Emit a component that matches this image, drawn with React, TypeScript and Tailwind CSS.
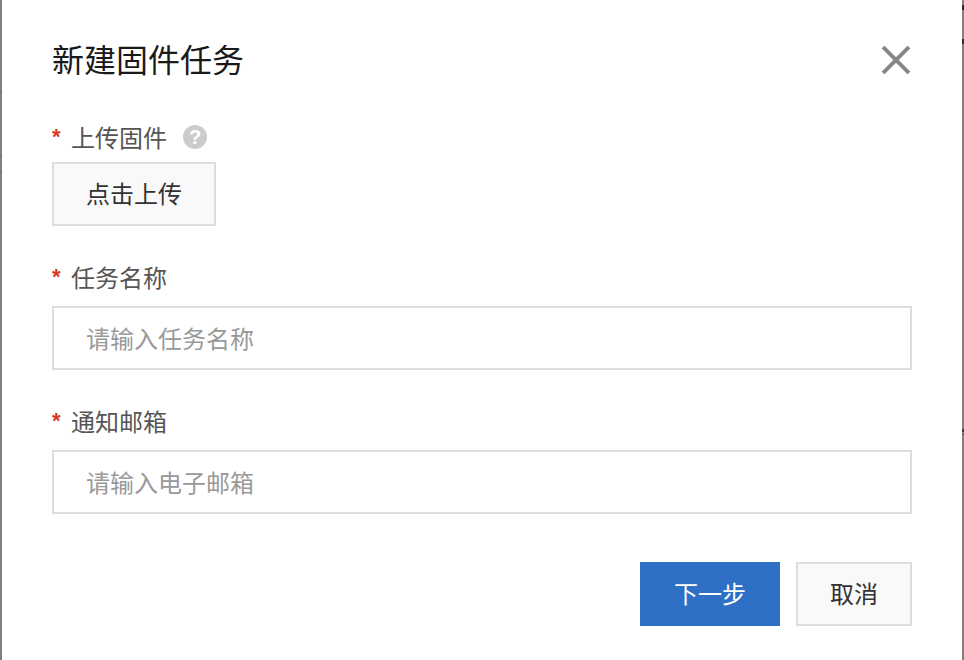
function FieldLabel({ text, children, className }: { text: string; children?: React.ReactNode; className: string }) {
  return (
    <div className={`flex items-center pb-[3px] text-[24px] text-[#555] ${className}`}>
      <span className="w-[19px] font-['Liberation_Sans',sans-serif] text-[22px] font-bold leading-none text-[#d9352b]">*</span>
      <span>{text}</span>
      {children}
    </div>
  );
}

// bits of the page behind the dialog that show through the side borders
const edgeMarks = [
  'right-0 top-[5px] h-[5px] bg-[#2a2a2a]',
  'right-0 top-[39px] h-[5px] bg-[#2a2a2a]',
  'right-0 top-[429px] h-[3px] bg-[#3a3a3a]',
  'right-0 top-[434px] h-[1px] bg-[#555]',
  'left-0 top-[92px] h-[1px] bg-[#666]',
  'left-0 top-[155px] h-[1px] bg-[#666]',
  'left-0 top-[172px] h-[1px] bg-[#666]',
];

export default function App() {
  return (
    <div className="relative h-[660px] w-[964px] overflow-hidden">
      <div className="h-full border-x-2 border-[#808080] bg-white px-[50px] pt-[40px] font-['Noto_Sans_CJK_SC','Noto_Sans',sans-serif]">
        <div className="flex h-[40px] items-center justify-between">
          <h1 className="pb-[4px] text-[32px] font-normal text-[#1a1a1a]">新建固件任务</h1>
          <button className="mr-[2px] text-[#888]">
            <svg width="28" height="28" viewBox="0 0 28 28" fill="none" stroke="currentColor" strokeWidth="4">
              <path d="M1 1L27 27M27 1L1 27" />
            </svg>
          </button>
        </div>

        <FieldLabel text="上传固件" className="mt-[34px] h-[48px]">
          <span className="ml-[16px] mt-[1px] flex h-[24px] w-[24px] items-center justify-center rounded-full bg-[#ccc] font-['Liberation_Sans',sans-serif] text-[20px] font-bold leading-none text-white">?</span>
        </FieldLabel>
        <button className="h-[64px] w-[164px] border-2 border-[#ddd] bg-[#f9f9f9] pb-[3px] text-[24px] text-[#333]">点击上传</button>

        <FieldLabel text="任务名称" className="mt-[24px] h-[56px]" />
        <input
          placeholder="请输入任务名称"
          className="block h-[64px] w-[860px] border-2 border-[#ddd] bg-white px-[32px] pb-[2px] text-[24px] text-[#333] outline-none placeholder:text-[#999]"
        />

        <FieldLabel text="通知邮箱" className="mt-[24px] h-[56px]" />
        <input
          placeholder="请输入电子邮箱"
          className="block h-[64px] w-[860px] border-2 border-[#ddd] bg-white px-[32px] pb-[2px] text-[24px] text-[#333] outline-none placeholder:text-[#999]"
        />

        <div className="mt-[48px] flex w-[860px] justify-end gap-[16px]">
          <button className="h-[64px] w-[140px] bg-[#2d70c6] pb-[3px] text-[24px] text-white">下一步</button>
          <button className="h-[64px] w-[116px] border-2 border-[#ddd] bg-[#f9f9f9] pb-[3px] text-[24px] text-[#333]">取消</button>
        </div>
      </div>

      {edgeMarks.map(mark => (
        <div key={mark} className={`absolute w-[2px] ${mark}`} />
      ))}
    </div>
  );
}
